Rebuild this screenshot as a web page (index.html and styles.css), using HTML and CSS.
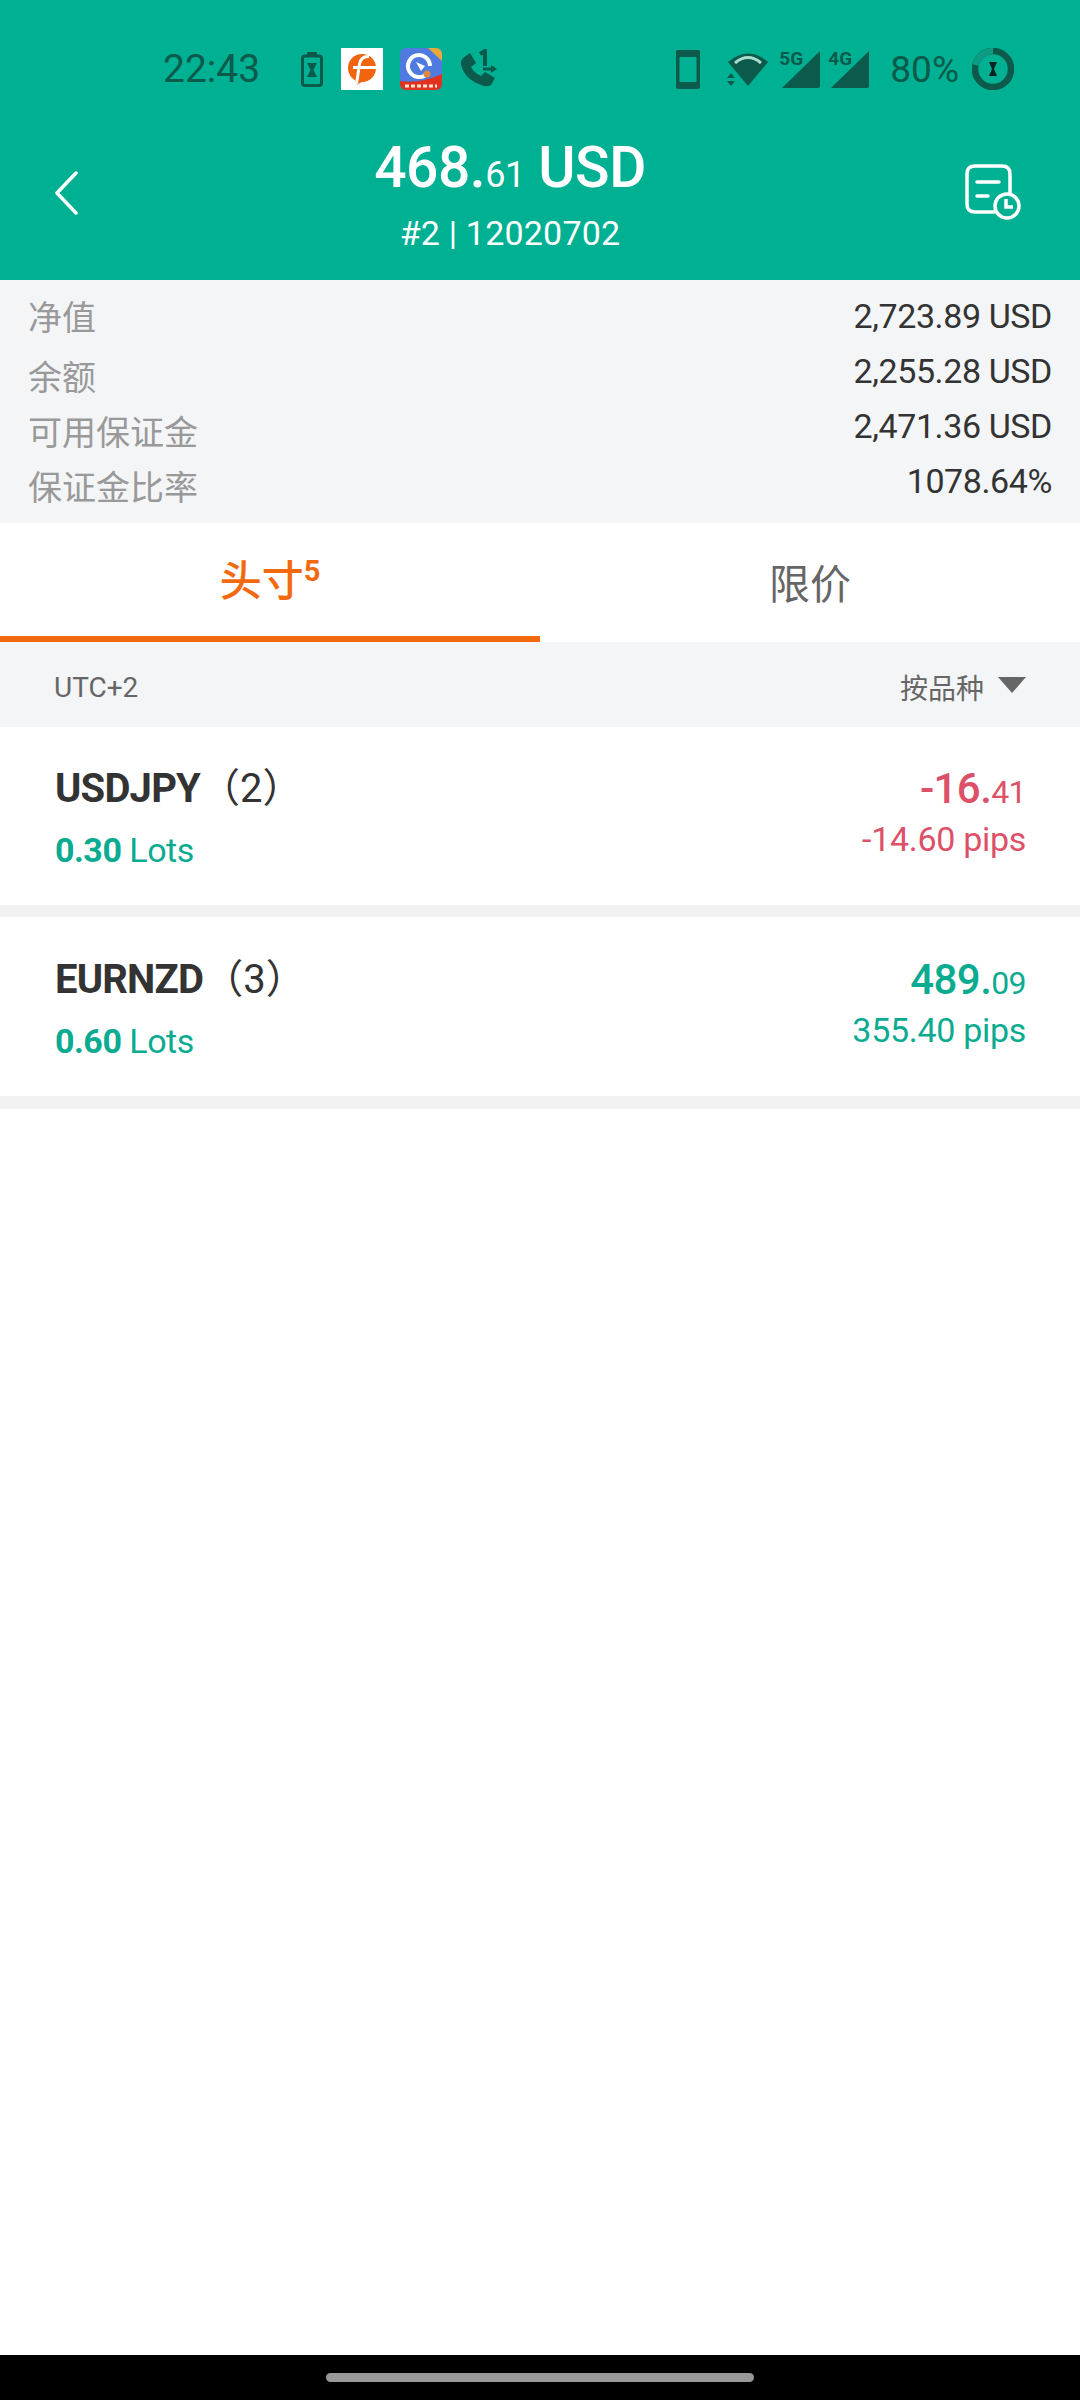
FILE: index.html
```html
<!DOCTYPE html>
<html lang="zh-CN">

<head>
	<title>头寸</title>
	<meta charset="UTF-8">
	<meta name="viewport" content="width=device-width,initial-scale=1">
	<link rel="stylesheet" href="styles.css">
</head>

<body>
	<div class="screen">
		<header class="header">
			<div class="status-bar">
				<div class="status-left">
					<span class="clock">22:43</span>
					<svg class="ic-saver" viewBox="0 0 22 35">
						<rect x="1.5" y="4" width="19" height="29.5" rx="2.5" fill="none" stroke="#0b5a4c" stroke-width="3" />
						<rect x="6" y="0" width="10" height="4" fill="#0b5a4c" />
						<path d="M6 11h10l-3.5 7 3.5 7H6l3.5-7z" fill="#0b5a4c" />
					</svg>
					<svg class="ic-app" viewBox="0 0 42 42">
						<rect width="42" height="42" fill="#fff" />
						<circle cx="21" cy="20" r="14" fill="#f2640f" />
						<path d="M14 30l2 7 9-6z" fill="#f2640f" />
						<path d="M28 8.5Q20 8 18.500 16L15.500 36M12 19.500H36" fill="none" stroke="#fff" stroke-width="3" />
					</svg>
					<svg class="ic-app" viewBox="0 0 42 42">
						<defs>
							<clipPath id="appClip">
								<rect width="42" height="42" rx="6" />
							</clipPath>
						</defs>
						<g clip-path="url(#appClip)">
							<rect width="42" height="42" fill="#4f7be0" />
							<path d="M28 0h14v13z" fill="#e6a93a" />
							<path d="M0 33Q20 36 42 26V42H0z" fill="#e0321f" />
							<path d="M26.800 25.800A11 11 0 1 1 30 18" fill="none" stroke="#fff" stroke-width="4" />
							<path d="M16 14l9 4-4 5z" fill="#fff" />
							<circle cx="27" cy="26" r="3.500" fill="#e08a3c" />
							<path d="M5 38h32" stroke="#fbe3d4" stroke-width="3" stroke-dasharray="4 2" />
						</g>
					</svg>
					<svg class="ic-call" viewBox="0 0 40 40">
						<path d="M4 9l7-5 6 10-5 4q3 6 10 9l4-4 10 6-4 7q-3 2-7 1Q5 31 2 15q0-4 2-6z" fill="#0b5a4c" />
						<path d="M21 5l5-3v15" fill="none" stroke="#0b5a4c" stroke-width="4" />
						<path d="M24 20h9" fill="none" stroke="#0b5a4c" stroke-width="3" />
						<path d="M32 16l6 4-6 4z" fill="#0b5a4c" />
					</svg>
				</div>
				<div class="status-right">
					<svg class="ic-device" viewBox="0 0 24 39">
						<path fill-rule="evenodd" d="M2 0h20a2 2 0 0 1 2 2v35a2 2 0 0 1-2 2H2a2 2 0 0 1-2-2V2a2 2 0 0 1 2-2zM3.500 7v25h17V7z" fill="#0b5a4c" />
					</svg>
					<svg class="ic-wifi" viewBox="0 0 42 34">
						<path d="M1 10Q21-7 41 10L21 34z" fill="#0b5a4c" />
						<path d="M8 11Q21 0 34 11" fill="none" stroke="#a7dccf" stroke-width="3" />
						<path d="M0 26l4-5 4 5zM0 29l4 5 4-5z" fill="#0b5a4c" />
					</svg>
					<div class="signal">
						<svg viewBox="0 0 38 37">
							<path d="M38 0v35q0 2-2 2H0z" fill="#0b5a4c" />
						</svg>
						<span class="signal-label">5G</span>
					</div>
					<div class="signal">
						<svg viewBox="0 0 38 37">
							<path d="M38 0v35q0 2-2 2H0z" fill="#0b5a4c" />
						</svg>
						<span class="signal-label">4G</span>
					</div>
					<span class="battery">80%</span>
					<svg class="ic-ring" viewBox="0 0 42 42">
						<circle cx="21" cy="21" r="18" fill="none" stroke="#0b5a4c" stroke-width="6.500" />
						<path d="M21 3A18 18 0 0 0 3.500 17" fill="none" stroke="#0d9b83" stroke-width="6.500" />
						<path d="M17 14h8l-3 7 3 7h-8l3-7z" fill="#04231e" />
					</svg>
				</div>
			</div>
			<div class="nav">
				<svg class="ic-back" viewBox="0 0 24 44">
					<path d="M22 2L3 22l19 20" fill="none" stroke="#fff" stroke-width="3.500" stroke-linecap="round" stroke-linejoin="round" />
				</svg>
				<div class="nav-title">
					<div class="nav-amount">468.<small>61</small> USD</div>
					<div class="nav-account">#2 | 12020702</div>
				</div>
				<svg class="ic-history" viewBox="0 0 56 56">
					<path d="M29 48H10q-8 0-8-8V10q0-8 8-8h27q8 0 8 8v19" fill="none" stroke="#fff" stroke-width="3.500" stroke-linecap="round" />
					<path d="M12 18h22M12 32h11" fill="none" stroke="#fff" stroke-width="3.500" stroke-linecap="round" />
					<circle cx="42" cy="42" r="12" fill="none" stroke="#fff" stroke-width="3.500" />
					<path d="M41 35v8h7" fill="none" stroke="#fff" stroke-width="3.500" />
				</svg>
			</div>
		</header>

		<section class="summary">
			<div class="summary-row"><span class="summary-label">净值</span><span class="summary-value">2,723.89 USD</span></div>
			<div class="summary-row"><span class="summary-label">余额</span><span class="summary-value">2,255.28 USD</span></div>
			<div class="summary-row"><span class="summary-label">可用保证金</span><span class="summary-value">2,471.36 USD</span></div>
			<div class="summary-row"><span class="summary-label">保证金比率</span><span class="summary-value">1078.64%</span></div>
		</section>

		<nav class="tabs">
			<div class="tab tab-active"><span>头寸<sup>5</sup></span></div>
			<div class="tab"><span>限价</span></div>
		</nav>

		<div class="filter-bar">
			<span class="filter-text">UTC+2</span>
			<div class="filter-sort">
				<span class="filter-text">按品种</span>
				<i class="caret"></i>
			</div>
		</div>

		<div class="position">
			<div class="position-left">
				<div class="position-name">USDJPY<span class="position-count">（2）</span></div>
				<div class="position-lots"><b>0.30</b> Lots</div>
			</div>
			<div class="position-right loss">
				<div class="position-profit">-16.<small>41</small></div>
				<div class="position-pips">-14.60 pips</div>
			</div>
		</div>

		<div class="position">
			<div class="position-left">
				<div class="position-name">EURNZD<span class="position-count">（3）</span></div>
				<div class="position-lots"><b>0.60</b> Lots</div>
			</div>
			<div class="position-right gain">
				<div class="position-profit">489.<small>09</small></div>
				<div class="position-pips">355.40 pips</div>
			</div>
		</div>

		<div class="filler"></div>

		<div class="gesture-bar"><i class="gesture-pill"></i></div>
	</div>
</body>

</html>
```

FILE: styles.css
```css
:root {
	--green: #00b092;
	--green-text: #0aab90;
	--dark-icon: #0b5a4c;
	--red: #dc5068;
	--orange: #f2690f;
	--text: #333;
	--muted: #666;
	--cjk: Roboto, "Noto Sans CJK SC", sans-serif;
}

* {
	box-sizing: border-box;
}

body {
	margin: 0;
	font-family: var(--cjk);
	background: #fff;
	color: var(--text);
}

.screen {
	display: flex;
	flex-direction: column;
	width: 1080px;
	height: 2400px;
	overflow: hidden;
}

/* header */

.header {
	height: 280px;
	background: var(--green);
	color: #fff;
}

.status-bar {
	display: flex;
	justify-content: space-between;
	align-items: center;
	height: 138px;
	padding: 0 66px 0 163px;
}

.status-left,
.status-right {
	display: flex;
	align-items: center;
}

.clock {
	font-size: 39px;
	color: var(--dark-icon);
	margin-right: 41px;
}

.ic-saver {
	width: 22px;
	height: 35px;
	margin-right: 18px;
}

.ic-app {
	width: 42px;
	height: 42px;
	margin-right: 17px;
}

.ic-call {
	width: 40px;
	height: 40px;
}

.ic-device {
	width: 24px;
	height: 39px;
	margin-right: 27px;
}

.ic-wifi {
	width: 42px;
	height: 34px;
	margin-right: 13px;
}

.signal {
	position: relative;
	width: 38px;
	height: 37px;
	margin-right: 11px;
}

.signal svg {
	display: block;
	width: 38px;
	height: 37px;
}

.signal-label {
	position: absolute;
	top: -1px;
	left: -3px;
	font-size: 19px;
	font-weight: 700;
	line-height: 18px;
	color: var(--dark-icon);
}

.battery {
	font-size: 37px;
	color: var(--dark-icon);
	margin: 0 13px 0 10px;
}

.ic-ring {
	width: 42px;
	height: 42px;
}

.nav {
	display: flex;
	justify-content: space-between;
	align-items: flex-start;
	padding: 0 59px 0 54px;
}

.ic-back {
	width: 24px;
	height: 44px;
	margin-top: 33px;
}

.nav-title {
	text-align: center;
	margin-right: 23px;
}

.nav-amount {
	font-size: 57px;
	font-weight: 500;
	letter-spacing: -0.5px;
	line-height: 66px;
	margin-top: -3px;
}

.nav-amount small {
	font-size: 36px;
	font-weight: 400;
}

.nav-account {
	font-size: 34px;
	letter-spacing: 0.2px;
	line-height: 40px;
	margin-top: 5px;
}

.ic-history {
	width: 56px;
	height: 56px;
	margin-top: 26px;
}

/* account summary */

.summary {
	height: 243px;
	padding: 14px 28px 0;
	background: #f4f5f7;
}

.summary-row {
	display: flex;
	justify-content: space-between;
	align-items: flex-start;
	height: 55px;
}

.summary-label {
	font-size: 34px;
	line-height: 48px;
	margin-top: 5px;
	color: #999;
}

.summary-row:first-child .summary-label {
	margin-top: 0;
}

.summary-value {
	font-size: 34px;
	letter-spacing: -0.4px;
	line-height: 44px;
	color: var(--text);
}

/* tabs */

.tabs {
	display: flex;
	height: 119px;
}

.tab {
	display: flex;
	justify-content: center;
	align-items: center;
	flex: 1;
	font-size: 41px;
	color: var(--muted);
	padding-bottom: 4px;
}

.tab-active {
	color: var(--orange);
	font-size: 42px;
	font-weight: 500;
	border-bottom: 6px solid var(--orange);
}

.tab sup {
	font-size: 29px;
	font-weight: 700;
	line-height: 0;
	vertical-align: 15px;
}

/* filter row */

.filter-bar {
	display: flex;
	justify-content: space-between;
	align-items: center;
	height: 85px;
	padding: 0 54px;
	background: #f4f5f7;
	color: var(--muted);
	font-size: 28px;
}

.filter-text {
	padding-top: 5px;
}

.filter-sort {
	display: flex;
	align-items: center;
	gap: 14px;
}

.caret {
	width: 0;
	height: 0;
	border-left: 14px solid transparent;
	border-right: 14px solid transparent;
	border-top: 16px solid var(--muted);
}

/* position rows */

.position {
	display: flex;
	justify-content: space-between;
	height: 190px;
	padding: 37px 54px 0 55px;
	border-bottom: 12px solid #f2f2f2;
}

.position + .position {
	height: 192px;
	padding-top: 38px;
	border-bottom-width: 13px;
}

.position-name {
	font-size: 40px;
	font-weight: 700;
	letter-spacing: -0.8px;
	line-height: 50px;
}

.position-count {
	font-weight: 400;
	letter-spacing: 0;
}

.position-lots {
	font-size: 34px;
	letter-spacing: -0.5px;
	line-height: 44px;
	margin-top: 14px;
	color: var(--green-text);
}

.position-lots b {
	font-weight: 700;
}

.position-right {
	text-align: right;
}

.position-profit {
	font-size: 42px;
	font-weight: 500;
	letter-spacing: -0.6px;
	line-height: 50px;
}

.position-profit small {
	font-size: 32px;
	font-weight: 400;
}

.position-pips {
	font-size: 34px;
	letter-spacing: -0.3px;
	line-height: 40px;
	margin-top: 2px;
}

.loss {
	color: var(--red);
}

.gain {
	color: var(--green-text);
}

.filler {
	flex: 1;
}

.gesture-bar {
	display: flex;
	justify-content: center;
	height: 45px;
	padding-top: 18px;
	background: #000;
}

.gesture-pill {
	width: 428px;
	height: 9px;
	border-radius: 5px;
	background: #999;
}
```
